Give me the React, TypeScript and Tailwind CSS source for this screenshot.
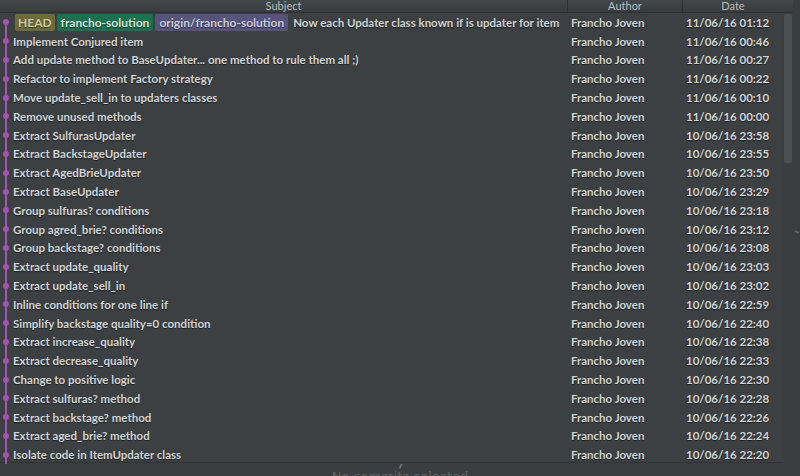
import React from "react";

const rows: [string, string][] = [
  ["Now each Updater class known if is updater for item", "11/06/16 01:12"],
  ["Implement Conjured item", "11/06/16 00:46"],
  ["Add update method to BaseUpdater... one method to rule them all ;)", "11/06/16 00:27"],
  ["Refactor to implement Factory strategy", "11/06/16 00:22"],
  ["Move update_sell_in to updaters classes", "11/06/16 00:10"],
  ["Remove unused methods", "11/06/16 00:00"],
  ["Extract SulfurasUpdater", "10/06/16 23:58"],
  ["Extract BackstageUpdater", "10/06/16 23:55"],
  ["Extract AgedBrieUpdater", "10/06/16 23:50"],
  ["Extract BaseUpdater", "10/06/16 23:29"],
  ["Group sulfuras? conditions", "10/06/16 23:18"],
  ["Group agred_brie? conditions", "10/06/16 23:12"],
  ["Group backstage? conditions", "10/06/16 23:08"],
  ["Extract update_quality", "10/06/16 23:03"],
  ["Extract update_sell_in", "10/06/16 23:02"],
  ["Inline conditions for one line if", "10/06/16 22:59"],
  ["Simplify backstage quality=0 condition", "10/06/16 22:40"],
  ["Extract increase_quality", "10/06/16 22:38"],
  ["Extract decrease_quality", "10/06/16 22:33"],
  ["Change to positive logic", "10/06/16 22:30"],
  ["Extract sulfuras? method", "10/06/16 22:28"],
  ["Extract backstage? method", "10/06/16 22:26"],
  ["Extract aged_brie? method", "10/06/16 22:24"],
  ["Isolate code in ItemUpdater class", "10/06/16 22:20"],
];

export default function App() {
  const font = { fontFamily: 'Lato, "DejaVu Sans", sans-serif' };
  return (
    <div className="w-[800px] h-[476px] overflow-hidden bg-[#3c4042] flex flex-col" style={font}>
      <div className="flex h-[463px] shrink-0">
        <div className="w-[793px] flex flex-col border-b border-[#2f3234]">
          {/* header */}
          <div className="h-[13px] flex bg-gradient-to-b from-[#42474a] to-[#383c3e] border-b border-[#2e3133] text-[11px] leading-[12px] text-[#b9bcbd]">
            <div className="w-[568px] text-center border-r border-[#2e3133]">Subject</div>
            <div className="w-[115px] text-center border-r border-[#2e3133]">Author</div>
            <div className="flex-1 text-center pr-[10px]">Date</div>
          </div>
          <div className="flex flex-1">
            <div className="w-[783px] flex flex-col">
              {rows.map(([msg, date], i) => (
                <div key={i} className="h-[18.8px] flex items-center text-[11.5px] font-bold text-[#d2d4d5] [text-shadow:0_1px_1px_rgba(0,0,0,0.5)]">
                  <div className="w-[13px] h-full relative shrink-0">
                    <div className={`absolute left-[5px] w-[2px] bg-[#a552b4] ${i === 0 ? "top-1/2 bottom-0" : "top-0 bottom-0"}`} />
                    <div className="absolute left-[3px] top-1/2 -mt-[3px] w-[6px] h-[6px] rounded-full bg-[#a552b4]" />
                  </div>
                  <div className="w-[555px] flex items-center gap-[2px] whitespace-nowrap overflow-hidden">
                    {i === 0 && (
                      <>
                        <span className="ml-[2px] px-[3px] h-[17px] leading-[17px] rounded-[2px] bg-[#6e6b3a] text-[#cfcda6] text-[12px]">HEAD</span>
                        <span className="px-[4px] h-[17px] leading-[17px] rounded-[2px] bg-[#19714f] text-[#d6e2da] text-[12px]">francho-solution</span>
                        <span className="px-[4px] h-[17px] leading-[17px] rounded-[2px] bg-[#56547c] text-[#cbcbdc] text-[12px] mr-[3px]">origin/francho-solution</span>
                      </>
                    )}
                    <span>{msg}</span>
                  </div>
                  <div className="w-[115px] pl-[3px] whitespace-nowrap">Francho Joven</div>
                  <div className="flex-1 pl-[3px] whitespace-nowrap">{date}</div>
                </div>
              ))}
            </div>
            <div className="w-[10px] bg-[#3a3e40] pt-[1px]">
              <div className="mx-[1px] h-[149px] rounded-[2px] bg-[#4b5053]" />
            </div>
          </div>
        </div>
        <div className="flex-1 bg-[#393d3f] flex flex-col justify-center items-center">
          <div className="text-[6px] leading-[6px] text-[#6b7072] [writing-mode:vertical-rl] tracking-[-1px]">////</div>
        </div>
      </div>
      <div className="flex-1 bg-[#3a3e40] flex flex-col items-center">
        <div className="text-[6px] leading-[5px] text-[#888d90] tracking-[-1px]">////</div>
        <div className="text-[13px] leading-[14px] text-[#5d6264] mt-[2px]" style={{ fontFamily: '"DejaVu Sans", sans-serif' }}>No commits selected</div>
      </div>
    </div>
  );
}
